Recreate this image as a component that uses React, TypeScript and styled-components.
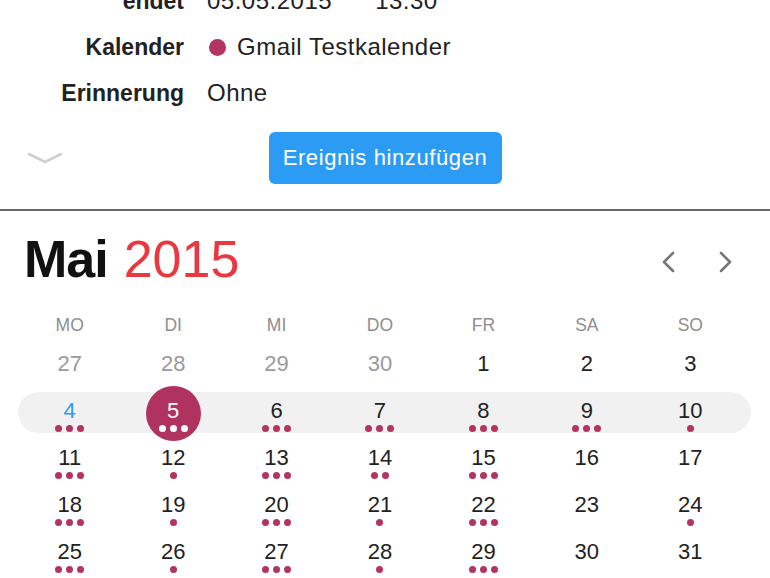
import React from 'react';
import styled, {createGlobalStyle} from 'styled-components';

const GlobalStyle = createGlobalStyle`
    html, body {
        margin: 0;
        padding: 0;
        background: #fff;
    }
    body {
        font-family: 'Liberation Sans', Arial, sans-serif;
        overflow: hidden;
    }
`;

const Page = styled.div`
    width: 770px;
    height: 578px;
    overflow: hidden;
    background: #fff;
`;

const EventForm = styled.div`
    display: grid;
    grid-template-columns: 184px 1fr;
    column-gap: 23px;
    margin-top: -22px;
`;

const Label = styled.div`
    height: 46px;
    line-height: 46px;
    text-align: right;
    font-size: 23px;
    font-weight: 700;
    color: #222;
`;

const Value = styled.div`
    height: 46px;
    line-height: 46px;
    font-size: 24px;
    letter-spacing: 0.5px;
    color: #222;
    white-space: nowrap;
`;

const Time = styled.span`
    margin-left: 43px;
`;

const CalendarDot = styled.span`
    display: inline-block;
    width: 17px;
    height: 17px;
    border-radius: 50%;
    background: #b3345f;
    margin: 0 11px 0 2px;
    vertical-align: -1px;
`;

const ActionBar = styled.div`
    display: grid;
    grid-template-columns: 1fr auto 1fr;
    align-items: center;
    height: 52px;
    margin-top: 16px;
`;

const ExpandToggle = styled.div`
    display: flex;
    padding-left: 27px;
`;

const AddButton = styled.button`
    width: 233px;
    height: 52px;
    border: none;
    border-radius: 6px;
    background: #2c9bf4;
    color: #fff;
    font-family: 'Liberation Sans', Arial, sans-serif;
    font-size: 22px;
    letter-spacing: 0.6px;
    padding: 0;
`;

const Divider = styled.div`
    height: 2px;
    margin-top: 25px;
    background: #676767;
`;

const CalendarHeader = styled.div`
    display: flex;
    align-items: center;
    justify-content: space-between;
    padding: 22px 37px 0 24px;
`;

const Title = styled.div`
    font-size: 52px;
    line-height: 52px;
    white-space: nowrap;
`;

const MonthName = styled.span`
    font-weight: 700;
    color: #111;
    letter-spacing: -1px;
`;

const Year = styled.span`
    color: #e9383f;
    margin-left: 16px;
`;

const Nav = styled.div`
    display: flex;
    gap: 44px;
    margin-top: 5px;
`;

const Weekdays = styled.div`
    display: grid;
    grid-template-columns: repeat(7, 1fr);
    width: 724px;
    margin: 22px 0 2px 18px;
    height: 36px;
    align-items: center;
`;

const Weekday = styled.div`
    text-align: center;
    font-size: 17.5px;
    color: #8e8e8e;
`;

const Month = styled.div`
    display: flex;
    flex-direction: column;
    gap: 6px;
`;

const Week = styled.div<{$current?: boolean}>`
    display: grid;
    grid-template-columns: repeat(7, 1fr);
    box-sizing: border-box;
    width: 733px;
    height: 41px;
    margin-left: 18px;
    padding-right: 9px;
    border-radius: 20.5px;
    background: ${p => (p.$current ? '#f1f1f1' : 'transparent')};
`;

const DayCell = styled.div<{$selected?: boolean}>`
    position: relative;
    display: flex;
    flex-direction: column;
    align-items: center;
    padding-top: 8px;

    ${p => p.$selected && `
        &::before {
            content: '';
            position: absolute;
            top: -6.5px;
            left: 50%;
            width: 55px;
            height: 55px;
            margin-left: -27.5px;
            border-radius: 50%;
            background: #b0325e;
        }
    `}
`;

type Tone = 'muted' | 'normal' | 'today' | 'selected';

const toneColor: Record<Tone, string> = {
    muted: '#9a9a9a',
    normal: '#222',
    today: '#2c9bf4',
    selected: '#fff',
};

const DayNum = styled.div<{$tone: Tone}>`
    position: relative;
    font-size: 22px;
    line-height: 22px;
    color: ${p => toneColor[p.$tone]};
`;

const Dots = styled.div`
    position: relative;
    display: flex;
    gap: 4px;
    height: 7px;
    margin-top: 3px;
`;

const Dot = styled.span<{$light?: boolean}>`
    width: 7px;
    height: 7px;
    border-radius: 50%;
    background: ${p => (p.$light ? '#fff' : '#b3345f')};
`;

type Day = {d: number; dots?: number; tone?: Tone};

const weeks: Day[][] = [
    [
        {d: 27, tone: 'muted'}, {d: 28, tone: 'muted'}, {d: 29, tone: 'muted'}, {d: 30, tone: 'muted'},
        {d: 1}, {d: 2}, {d: 3},
    ],
    [
        {d: 4, dots: 3, tone: 'today'}, {d: 5, dots: 3, tone: 'selected'}, {d: 6, dots: 3}, {d: 7, dots: 3},
        {d: 8, dots: 3}, {d: 9, dots: 3}, {d: 10, dots: 1},
    ],
    [
        {d: 11, dots: 3}, {d: 12, dots: 1}, {d: 13, dots: 3}, {d: 14, dots: 2},
        {d: 15, dots: 3}, {d: 16}, {d: 17},
    ],
    [
        {d: 18, dots: 3}, {d: 19, dots: 1}, {d: 20, dots: 3}, {d: 21, dots: 1},
        {d: 22, dots: 3}, {d: 23}, {d: 24, dots: 1},
    ],
    [
        {d: 25, dots: 3}, {d: 26, dots: 1}, {d: 27, dots: 3}, {d: 28, dots: 1},
        {d: 29, dots: 3}, {d: 30}, {d: 31},
    ],
];

const weekdayNames = ['MO', 'DI', 'MI', 'DO', 'FR', 'SA', 'SO'];

function Chevron({dir}: {dir: 'left' | 'right'}) {
    const points = dir === 'left' ? '12,2 3,11 12,20' : '2,2 11,11 2,20';
    return (
        <svg width='14' height='22' viewBox='0 0 14 22'>
            <polyline points={points} fill='none' stroke='#777' strokeWidth='2.6' strokeLinecap='round' strokeLinejoin='round'/>
        </svg>
    );
}

export default function App() {
    return (
        <Page>
            <GlobalStyle/>
            <EventForm>
                <Label>endet</Label>
                <Value>05.05.2015<Time>13:30</Time></Value>
                <Label>Kalender</Label>
                <Value><CalendarDot/>Gmail Testkalender</Value>
                <Label>Erinnerung</Label>
                <Value>Ohne</Value>
            </EventForm>
            <ActionBar>
                <ExpandToggle>
                    <svg width='36' height='12' viewBox='0 0 36 12'>
                        <polyline points='2,2 18,10 34,2' fill='none' stroke='#cfcfcf' strokeWidth='2.6' strokeLinecap='round' strokeLinejoin='round'/>
                    </svg>
                </ExpandToggle>
                <AddButton type='button'>Ereignis hinzufügen</AddButton>
                <div/>
            </ActionBar>
            <Divider/>
            <CalendarHeader>
                <Title>
                    <MonthName>Mai</MonthName>
                    <Year>2015</Year>
                </Title>
                <Nav>
                    <Chevron dir='left'/>
                    <Chevron dir='right'/>
                </Nav>
            </CalendarHeader>
            <Weekdays>
                {weekdayNames.map(name => <Weekday key={name}>{name}</Weekday>)}
            </Weekdays>
            <Month>
                {weeks.map((week, i) => (
                    <Week key={i} $current={i === 1}>
                        {week.map(day => {
                            const tone = day.tone || 'normal';
                            return (
                                <DayCell key={`${i}-${day.d}`} $selected={tone === 'selected'}>
                                    <DayNum $tone={tone}>{day.d}</DayNum>
                                    <Dots>
                                        {Array.from({length: day.dots || 0}).map((_, k) => (
                                            <Dot key={k} $light={tone === 'selected'}/>
                                        ))}
                                    </Dots>
                                </DayCell>
                            );
                        })}
                    </Week>
                ))}
            </Month>
        </Page>
    );
}
